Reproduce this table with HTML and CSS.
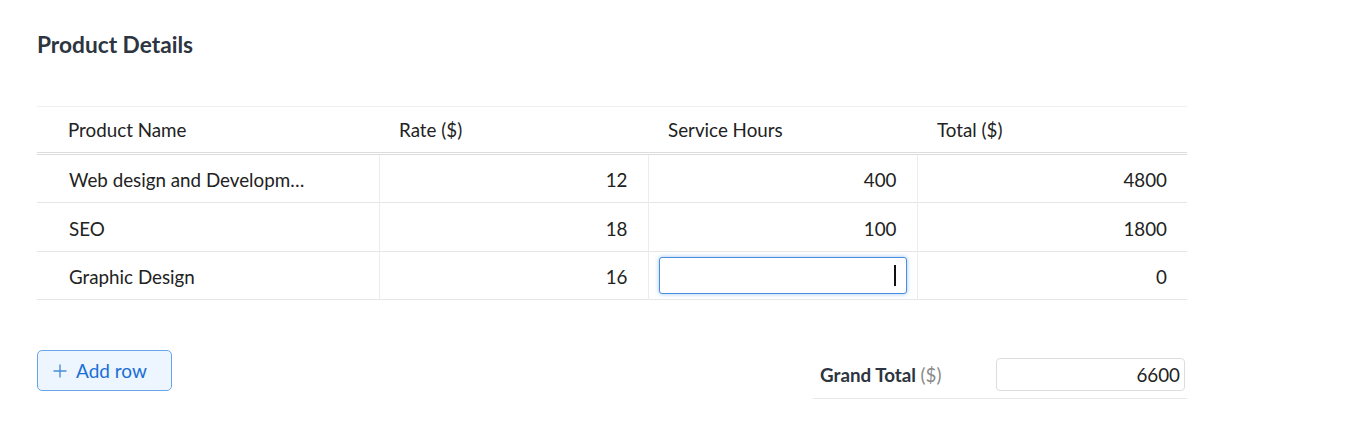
FILE: index.html
```html
<!DOCTYPE html>
<html lang="en">
<head>
<meta charset="utf-8">
<title>Product Details</title>
<link rel="stylesheet" href="styles.css">
</head>
<body>
<div class="page">
  <h2 class="title">Product Details</h2>
  <table class="grid">
    <colgroup>
      <col class="c-name"><col class="c-rate"><col class="c-hours"><col class="c-total">
    </colgroup>
    <thead>
      <tr>
        <th class="th-name">Product Name</th>
        <th>Rate ($)</th>
        <th>Service Hours</th>
        <th>Total ($)</th>
      </tr>
    </thead>
    <tbody>
      <tr>
        <td class="name"><span class="ellip">Web design and Development</span></td>
        <td class="num">12</td>
        <td class="num">400</td>
        <td class="num">4800</td>
      </tr>
      <tr>
        <td class="name">SEO</td>
        <td class="num">18</td>
        <td class="num">100</td>
        <td class="num">1800</td>
      </tr>
      <tr class="last">
        <td class="name">Graphic Design</td>
        <td class="num">16</td>
        <td class="edit"><div class="focus-input"><span class="caret"></span></div></td>
        <td class="num">0</td>
      </tr>
    </tbody>
  </table>
  <div class="footer">
    <button class="add-btn" type="button">
      <svg class="plus" width="14" height="14" viewBox="0 0 14 14"><path d="M7 0.5V13.5M0.5 7H13.5" stroke="#4a8fd9" stroke-width="1.4" fill="none"/></svg>
      <span>Add row</span>
    </button>
    <div class="grand">
      <span class="g-label">Grand Total <span class="g-unit">($)</span></span>
      <div class="g-box">6600</div>
    </div>
  </div>
</div>
</body>
</html>
```
FILE: styles.css
```css
* { box-sizing: border-box; }
body {
  margin: 0;
  background: #fff;
  font-family: Lato, "Open Sans", sans-serif;
  color: #222;
}
.page {
  padding: 31px 37px 0 37px;
  width: 1187px;
}
.title {
  margin: 0;
  font-size: 22.7px;
  line-height: 28px;
  font-weight: 700;
  color: #2d3540;
}
.grid {
  margin-top: 47px;
  width: 1150px;
  border-collapse: collapse;
  table-layout: fixed;
  font-size: 18.8px;
}
.c-name { width: 342px; }
.c-rate { width: 269px; }
.c-hours { width: 269px; }
.c-total { width: 270px; }
.grid thead tr {
  border-top: 1px solid #f0f0f0;
  border-bottom: 3px double #dcdcdc;
}
.grid th {
  height: 47px;
  padding: 0 20px;
  text-align: left;
  font-weight: 400;
  color: #222;
}
.grid th.th-name { padding-left: 31px; }
.grid tbody tr { border-bottom: 1px solid #e6e6e6; }
.grid td {
  height: 49px;
  padding: 2px 20px 0 20px;
  white-space: nowrap;
  border-left: 1px solid #ececec;
}
.grid tr.last td { height: 48px; }
.grid td.name {
  border-left: none;
  padding-left: 32px;
  overflow: hidden;
}
.ellip {
  display: block;
  width: 242px;
  overflow: hidden;
  text-overflow: ellipsis;
  white-space: nowrap;
}
.grid td.num { text-align: right; }
.grid td.edit { padding: 0 10px 0 10px; }
.focus-input {
  height: 37px;
  border: 1px solid #4a8fdd;
  border-radius: 3px;
  box-shadow: 0 0 4px rgba(74, 150, 230, 0.55);
  background: #fff;
  display: flex;
  justify-content: flex-end;
  align-items: center;
  padding-right: 10px;
}
.caret {
  width: 2px;
  height: 21px;
  background: #111;
}
.footer {
  margin-top: 50px;
  width: 1150px;
  display: flex;
  justify-content: space-between;
  align-items: flex-start;
}
.add-btn {
  width: 135px;
  height: 41px;
  border: 1px solid #6aa5e6;
  border-radius: 5px;
  background: #edf5fe;
  color: #1a6fd6;
  font-family: Lato, "Open Sans", sans-serif;
  font-size: 19px;
  display: flex;
  align-items: center;
  gap: 9px;
  padding: 0 0 0 15px;
}
.plus { flex: none; }
.grand {
  margin-top: 8px;
  width: 374px;
  height: 41px;
  border-bottom: 1px solid #e8e8e8;
  display: flex;
  align-items: flex-start;
  padding-left: 7px;
}
.g-label {
  font-size: 18.8px;
  font-weight: 700;
  color: #2d3540;
  line-height: 33px;
  width: 176px;
}
.g-unit { font-weight: 400; color: #8a8a8a; }
.g-box {
  width: 189px;
  height: 33px;
  border: 1px solid #ddd;
  border-radius: 4px;
  text-align: right;
  font-size: 18.8px;
  line-height: 31px;
  padding-right: 4px;
  color: #222;
}
```
